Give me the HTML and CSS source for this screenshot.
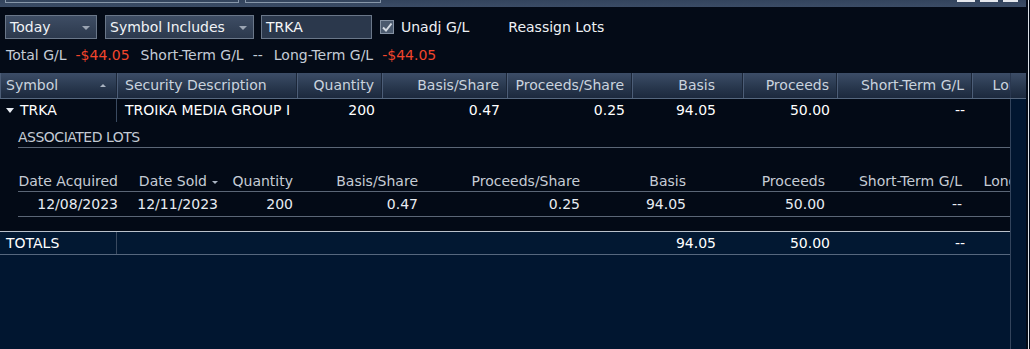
FILE: index.html
```html
<!doctype html>
<html>
<head>
 <title>Realized G/L</title>
 <meta name=viewport content="width=device-width, initial-scale=1">
 <link rel="stylesheet" href="styles.css">
</head>
<body>
<div class=window>
 <div class=app>
  <div class=tabs>
   <span class="tab tab-a"></span>
   <span class="tab tab-b"></span>
   <span class=winbtns><i></i><i></i><i></i></span>
  </div>

  <div class=toolbar>
   <div class="select sel-range">Today<span class=caret></span></div>
   <div class="select sel-filter">Symbol Includes<span class=caret></span></div>
   <div class=input>TRKA</div>
   <label class=check>
    <span class=box><svg width=12 height=12 viewBox="0 0 12 12"><polyline points="2,6.5 5,9.5 10.5,2.5" fill=none stroke="#d4dae2" stroke-width=2 /></svg></span>
    Unadj G/L
   </label>
   <span class=action>Reassign Lots</span>
  </div>

  <div class=summary>
   <span>Total G/L</span><span class="neg v">-$44.05</span>
   <span class=k>Short-Term G/L</span><span class=v>--</span>
   <span class=k>Long-Term G/L</span><span class="neg v">-$44.05</span>
  </div>

  <div class=grid>
   <div class=head>
    <div class="head-cols cols">
     <div class="hc left sym">Symbol<span class=up></span></div>
     <div class="hc left">Security Description</div>
     <div class=hc>Quantity</div>
     <div class=hc>Basis/Share</div>
     <div class=hc>Proceeds/Share</div>
     <div class="hc wide">Basis</div>
     <div class=hc>Proceeds</div>
     <div class=hc>Short-Term G/L</div>
     <div class=hc>Long-Term G/L</div>
    </div>
    <div class=head-fill></div>
   </div>

   <div class=grid-body>
    <div class=rows>
     <div class="row parent cols">
      <div class="c left sym"><span class=down></span>TRKA</div>
      <div class="c left desc">TROIKA MEDIA GROUP INC</div>
      <div class=c>200</div>
      <div class=c>0.47</div>
      <div class=c>0.25</div>
      <div class="c wide">94.05</div>
      <div class=c>50.00</div>
      <div class=c>--</div>
      <div class=c>-44.05</div>
     </div>

     <div class=lots>
      <div class=lots-title>ASSOCIATED LOTS</div>
      <div class="lot-head lcols">
       <div class=lc>Date Acquired</div>
       <div class=lc>Date Sold<span class=dn></span></div>
       <div class=lc>Quantity</div>
       <div class=lc>Basis/Share</div>
       <div class=lc>Proceeds/Share</div>
       <div class=lc>Basis</div>
       <div class=lc>Proceeds</div>
       <div class=lc>Short-Term G/L</div>
       <div class=lc>Long-Term G/L</div>
      </div>
      <div class="lot-row lcols">
       <div class=lc>12/08/2023</div>
       <div class=lc>12/11/2023</div>
       <div class=lc>200</div>
       <div class=lc>0.47</div>
       <div class=lc>0.25</div>
       <div class=lc>94.05</div>
       <div class=lc>50.00</div>
       <div class=lc>--</div>
       <div class=lc>-44.05</div>
      </div>
     </div>

     <div class="row totals cols">
      <div class="c left sym">TOTALS</div>
      <div class=c></div>
      <div class=c></div>
      <div class=c></div>
      <div class=c></div>
      <div class="c wide">94.05</div>
      <div class=c>50.00</div>
      <div class=c>--</div>
      <div class=c>-44.05</div>
     </div>
    </div>
    <div class=vscroll></div>
   </div>
  </div>
 </div>
 <div class=edge></div>
</div>
</body>
</html>
```

FILE: styles.css
```css
body {margin:0; height:349px; overflow:hidden; background:#040b17; color:#e8ecf2;
  font-family:"DejaVu Sans", Verdana, sans-serif; font-size:14px;}
.window {display:flex; height:349px;}
.app {width:1026px; display:flex; flex-direction:column;}
.edge {width:1px; margin-left:2px; background:#dfe4ea;}

/* top tab strip, mostly cut off */
.tabs {
  height:7px;
  display:flex;
  align-items:flex-end;
  background:linear-gradient(#33445d, #3b4c66);
  overflow:hidden;
}
.tab {height:10px; margin-bottom:4px; border:1px solid #8797aa; box-sizing:border-box;}
.tab-a {width:234px; margin-left:5px;}
.tab-b {width:136px; margin-left:6px;}
.winbtns {margin-left:auto; margin-right:8px; align-self:flex-start; display:flex; gap:5px;}
.winbtns i {width:18px; height:2px; background:#e6e9ee;}
.winbtns i:last-child {width:15px;}

/* filter bar */
.toolbar {display:flex; align-items:center; padding:8px 0 0 5px; height:24px;}
.select {
  position:relative;
  height:24px;
  box-sizing:border-box;
  border:1px solid #6a7789;
  background:linear-gradient(#3e4d64, #2c394d);
  padding:0 0 0 4px;
  line-height:22px;
  color:#f0f3f6;
}
.sel-range {width:92px;}
.sel-filter {width:149px; margin-left:8px;}
.caret {
  position:absolute; right:6px; top:10px;
  border-left:4px solid transparent; border-right:4px solid transparent;
  border-top:4px solid #9ba5b3;
}
.input {
  width:111px; height:24px; box-sizing:border-box; margin-left:7px;
  border:1px solid #6a7789; background:#2b384c;
  padding-left:4px; line-height:22px; color:#f4f6f8;
}
.check {display:flex; align-items:center; margin-left:8px; color:#eef1f5;}
.box {
  width:14px; height:14px; box-sizing:border-box; margin-right:7px;
  border:1px solid #8592a3; background:#4b5a6e;
  display:flex; align-items:center; justify-content:center;
}
.action {margin-left:39px; color:#eef1f5;}

.summary {margin-top:6px; padding-left:6px; line-height:20px; color:#c4ccd6; display:flex; white-space:nowrap;}
.summary .v {margin-left:9px;}
.summary .k {margin-left:11px;}
.neg {color:#f2452c;}

/* grid */
.grid {margin-top:8px; flex:1; display:flex; flex-direction:column;}
.cols {display:grid; grid-template-columns:117px 180px 85px 125px 125px 111px 94px 135px 128px;}
.head {
  display:flex;
  height:26px;
  box-sizing:border-box;
  border-bottom:1px solid #56677e;
  background:linear-gradient(#3c4d67, #27364c 60%, #1c293d);
}
.head-cols {width:1010px; overflow:hidden;}
.head-fill {flex:1; box-shadow:inset 1px 0 #2a3850;}
.hc {
  line-height:25px; text-align:right; padding-right:7px; color:#cad3de;
  border-right:1px solid #1b2638; box-shadow:inset 1px 0 #4c5d77;
  white-space:nowrap; overflow:hidden;
}
.left {text-align:left; padding-left:8px;}
.sym {padding-left:6px; position:relative;}
.wide {padding-right:27px;}
.up {
  position:absolute; right:10px; top:11px;
  border-left:3px solid transparent; border-right:3px solid transparent;
  border-bottom:3px solid #aab4c2;
}

.grid-body {flex:1; display:flex;}
.rows {width:1010px; overflow:hidden; background:#011630; display:flex; flex-direction:column;}
.vscroll {width:16px; background:#011630; box-shadow:inset 1px 0 #33445c;}

.row .c {
  text-align:right; padding-right:7px; white-space:nowrap; overflow:hidden;
}
.row .c.left {text-align:left; padding-left:8px;}
.row .c.desc {padding-right:0; margin-right:7px;}
.row .c.sym {padding-left:6px; border-right:1px solid #3a4a60;}
.row .c.wide {padding-right:27px;}
.parent {background:#030a16; height:23px; line-height:23px; color:#ffffff;}
.down {
  display:inline-block; vertical-align:middle; margin:-2px 6px 0 0;
  border-left:4px solid transparent; border-right:4px solid transparent;
  border-top:5px solid #e8ecf2;
}

.lots {background:#030a16; padding:0 0 14px 18px;}
.lots-title {
  margin-top:5px; line-height:20px; border-bottom:1px solid #5b6676;
  color:#c3cad4; letter-spacing:-0.5px;
}
.lcols {display:grid; grid-template-columns:104px 100px 75px 125px 162px 106px 139px 137px 121px;}
.lot-head {padding-top:23px; line-height:20px; border-bottom:1px solid #5b6676; color:#c6ccd5;}
.lot-row {line-height:24px; border-bottom:1px solid #5b6676;}
.lc {text-align:right; padding-right:4px; white-space:nowrap; overflow:hidden; position:relative;}
.dn {
  display:inline-block; vertical-align:middle; margin:0 0 0 5px;
  border-left:3px solid transparent; border-right:3px solid transparent;
  border-top:3px solid #aab4c2;
}

.totals {
  height:22px; line-height:22px; border-top:1px solid #b9c1cc; border-bottom:1px solid #56677e;
  background:#021832; color:#ffffff;
}
```
